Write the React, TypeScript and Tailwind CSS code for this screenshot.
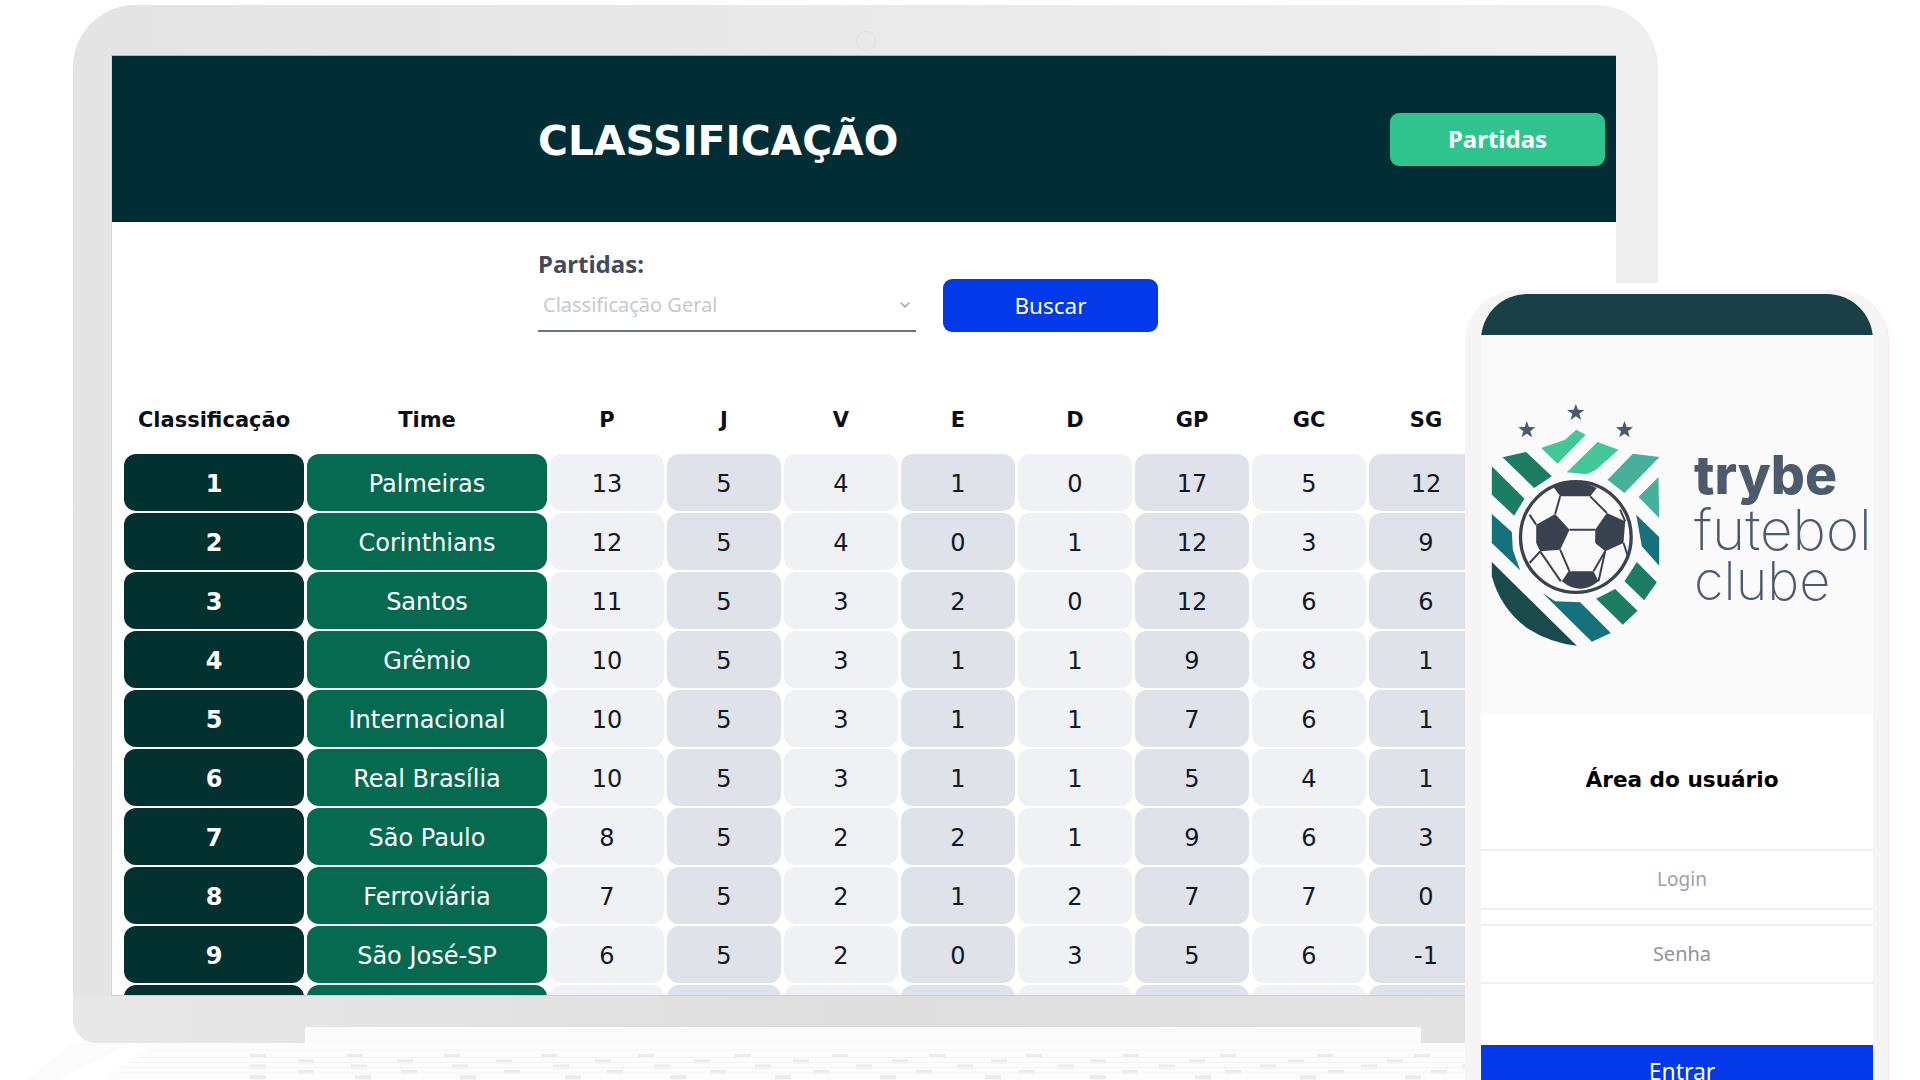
import React from 'react';
import { ChevronDown } from 'lucide-react';

const rows = [
  [1, 'Palmeiras', 13, 5, 4, 1, 0, 17, 5, 12],
  [2, 'Corinthians', 12, 5, 4, 0, 1, 12, 3, 9],
  [3, 'Santos', 11, 5, 3, 2, 0, 12, 6, 6],
  [4, 'Grêmio', 10, 5, 3, 1, 1, 9, 8, 1],
  [5, 'Internacional', 10, 5, 3, 1, 1, 7, 6, 1],
  [6, 'Real Brasília', 10, 5, 3, 1, 1, 5, 4, 1],
  [7, 'São Paulo', 8, 5, 2, 2, 1, 9, 6, 3],
  [8, 'Ferroviária', 7, 5, 2, 1, 2, 7, 7, 0],
  [9, 'São José-SP', 6, 5, 2, 0, 3, 5, 6, -1],
  ['', '', '', '', '', '', '', '', '', ''],
];

const heads = ['Classificação', 'Time', 'P', 'J', 'V', 'E', 'D', 'GP', 'GC', 'SG'];

const Star = ({ cx, cy }: { cx: number; cy: number }) => {
  const pts = [];
  for (let i = 0; i < 10; i++) {
    const r = i % 2 === 0 ? 27 : 11;
    const a = (Math.PI / 5) * i - Math.PI / 2;
    pts.push(`${cx + r * Math.cos(a)},${cy + r * Math.sin(a)}`);
  }
  return <polygon points={pts.join(' ')} fill="#4c5a6d" />;
};

// escudo desenhado nas coordenadas do recorte ampliado
const Shield = () => (
  <svg viewBox="150 370 515 735" className="w-[172px] h-[245px] shrink-0">
    <Star cx={260} cy={451} />
    <Star cx={407} cy={399} />
    <Star cx={553} cy={451} />
    <polygon points="303,505 375,480 408,450 437,465 352,552" fill="#43c796" />
    <polygon points="380,578 472,487 535,510 468,570 440,584" fill="#43c796" />
    <polygon points="502,600 578,522 658,532 553,640" fill="#47b09b" />
    <polygon points="595,652 655,592 657,715" fill="#47b09b" />
    <polygon points="187,533 258,517 335,590 282,625" fill="#1c7d62" />
    <polygon points="155,560 253,657 222,708 155,645" fill="#1c7d62" />
    <polygon points="155,703 215,757 218,810 240,872 155,790" fill="#16727a" />
    <path d="M155,847 L410,1098 Q330,1090 260,1045 Q180,985 155,890 Z" fill="#1a4a4c" />
    <polygon points="307,940 345,965 420,968 512,1060 455,1086" fill="#16727a" />
    <polygon points="468,957 525,928 592,993 548,1035" fill="#1c7d62" />
    <polygon points="553,905 590,847 650,908 612,962" fill="#1c7d62" />
    <polygon points="588,705 657,772 657,858 605,800" fill="#16727a" />
    <circle cx="407" cy="772" r="166" fill="#fafafa" stroke="#3a4250" strokeWidth="10" />
    <path d="M340,622 Q405,590 470,625 L450,650 L360,650 Z" fill="#3a4250" />
    <polygon points="288,735 345,703 388,750 360,810 300,815 288,790" fill="#3a4250" />
    <polygon points="465,750 500,700 555,725 550,790 495,815 465,790" fill="#3a4250" />
    <path d="M365,905 L385,875 L460,875 L475,905 Q420,950 365,905 Z" fill="#3a4250" />
    <g stroke="#3a4250" strokeWidth="6" fill="none">
      <path d="M388,750 L465,750 M360,810 L388,875 M495,815 L460,875 M360,650 L345,703 M450,650 L500,700" />
      <path d="M288,735 L268,705 M300,815 L268,850 M300,815 L362,905 M550,790 L565,835 M495,815 L475,905 M555,725 L540,690" />
    </g>
  </svg>
);

const Keyboard = () => {
  const keys = [];
  for (let row = 0; row < 5; row++) {
    for (let i = 0; i < 14; i++) {
      const x = 250 + (row % 2 === 0 ? 0 : 48) + i * 97 + i * row * 2;
      keys.push(<rect key={`${row}-${i}`} x={x} y={1054 + row * 5.3} width="16" height="4" fill="#ececec" />);
    }
  }
  return (
    <svg viewBox="0 1040 1500 40" className="absolute left-0 bottom-0 w-[1500px] h-[40px]">
      <polygon points="152,1043 1466,1043 1466,1080 105,1080" fill="#fcfcfc" />
      <polygon points="71,1043 130,1043 60,1080 27,1080" fill="#fbfbfb" />
      {keys}
      <path d="M150,1050 H1466 M140,1057.5 H1466 M130,1062.5 H1466 M120,1067.5 H1466 M110,1073 H1466" stroke="#f5f5f5" strokeWidth="1" />
    </svg>
  );
};

const App: React.FC = () => {
  return (
    <div className="relative w-[1920px] h-[1080px] overflow-hidden bg-white font-['DejaVu_Sans',sans-serif]">
      <Keyboard />

      {/* notebook */}
      <div className="absolute left-[73px] top-[5px] w-[1585px] h-[1038px] rounded-t-[62px] rounded-b-[24px] bg-gradient-to-r from-[#e4e4e4] to-[#efefef] pt-[50px] pl-[38px]">
        <div className="absolute left-[783px] top-[26px] w-[20px] h-[20px] rounded-full border border-[#e1e1e1]" />
        <div className="absolute left-0 right-0 bottom-0 h-[47px] rounded-b-[24px] bg-gradient-to-r from-[#e8e8e8] via-[#dedede] to-[#e4e4e4]" />
        <div className="absolute left-[232px] bottom-0 w-[1116px] h-[16px] bg-[#fbfbfb] rounded-t-[2px]" />

        <div className="relative w-[1505px] h-[941px] bg-white overflow-hidden border-t border-l border-b border-t-[#c9a9a9] border-l-[#d8d8d8] border-b-[#cfcfcf]">
          <header className="h-[166px] bg-[#012e35] flex items-center justify-between pl-[426px] pr-[11px]">
            <h1 className="mt-[4px] text-[40.8px] leading-none font-bold text-white">CLASSIFICAÇÃO</h1>
            <button className="w-[215px] h-[53px] rounded-[9px] bg-[#2fc48d] text-white text-[24px] font-bold font-['Noto_Sans',sans-serif]">
              Partidas
            </button>
          </header>

          <div className="pl-[426px] pt-[28px] flex items-end gap-[27px] font-['Noto_Sans',sans-serif]">
            <div className="w-[378px]">
              <p className="text-[24px] leading-[28px] font-bold text-[#434a59]">Partidas:</p>
              <div className="mt-[13px] h-[41px] flex items-center justify-between pl-[5px] pr-[3px] pb-[12px] border-b-2 border-[#6b7280] text-[20px] text-[#c6c9cf]">
                <span>Classificação Geral</span>
                <ChevronDown size={16} className="text-[#9a9ea6]" />
              </div>
            </div>
            <button className="w-[215px] h-[53px] rounded-[9px] bg-[#0339e8] text-white text-[22.5px]">Buscar</button>
          </div>

          <div className="ml-[12px] mt-[71px] grid grid-cols-[180px_240px_repeat(8,114px)] grid-rows-[49px_repeat(10,57px)] gap-x-[3px] gap-y-[2px] text-[24px] text-[#111827]">
            {heads.map((h) => (
              <div key={h} className="h-[36px] flex items-center justify-center text-[21px] font-bold text-[#0c0f17]">
                {h}
              </div>
            ))}
            {rows.flatMap((r, i) =>
              r.map((v, j) => (
                <div
                  key={`${i}-${j}`}
                  className={
                    'rounded-[12px] pt-[2px] flex items-center justify-center ' +
                    (j === 0
                      ? 'bg-[#03312f] text-white font-bold'
                      : j === 1
                        ? 'bg-[#056a50] text-white'
                        : j % 2 === 0
                          ? 'bg-[#f0f1f5]'
                          : 'bg-[#dfe2e9]')
                  }
                >
                  {v}
                </div>
              )),
            )}
          </div>
        </div>
      </div>

      {/* celular */}
      <div className="absolute left-[1465px] top-[283px] bg-white pt-[7px]">
        <div className="w-[424px] h-[800px] rounded-t-[52px] bg-[#f5f5f5] border-r border-[#fde6e6] pt-[4px] pl-[16px] pr-[15px]">
          <div className="h-[830px] rounded-t-[46px] overflow-hidden bg-white flex flex-col">
            <div className="h-[41px] bg-[#1a4047] shrink-0" />
            <div className="h-[379px] bg-[#fafafa] shrink-0 pl-[9px] pt-[68px] flex gap-[32px]">
              <Shield />
              <div className="pt-[44px] text-[#4c5a6d] font-['Inter',sans-serif]">
                <p className="text-[53.5px] leading-[55px] font-extrabold">trybe</p>
                <p className="text-[56.5px] leading-[55px] font-extralight">futebol</p>
                <p className="-mt-[4px] text-[54px] leading-[55px] font-extralight">clube</p>
              </div>
            </div>
            <h2 className="shrink-0 mt-[51px] pl-[10px] text-center text-[21.6px] leading-[30px] font-bold text-black">Área do usuário</h2>
            <div className="shrink-0 mt-[54px] pl-[10px] h-[61px] flex items-center justify-center border-y-2 border-[#eef0f3] text-[19px] text-[#9aa1ae] font-['Noto_Sans',sans-serif]">
              Login
            </div>
            <div className="shrink-0 mt-[14px] pl-[10px] h-[60px] flex items-center justify-center border-y-2 border-[#eef0f3] text-[20px] text-[#8d929c] font-['Noto_Sans',sans-serif]">
              Senha
            </div>
            <button className="shrink-0 mt-[61px] pl-[10px] h-[60px] pb-[8px] bg-[#0339e8] text-white text-[23px] font-['Noto_Sans',sans-serif]">
              Entrar
            </button>
          </div>
        </div>
      </div>
    </div>
  );
};

export default App;
